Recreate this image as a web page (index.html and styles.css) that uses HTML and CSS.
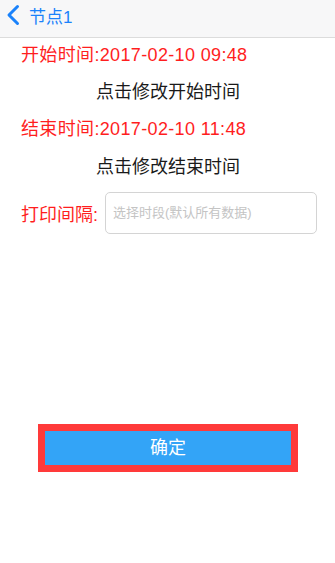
FILE: index.html
```html
<!DOCTYPE html>
<html lang="zh">
<head>
<meta charset="utf-8">
<link rel="stylesheet" href="styles.css">
</head>
<body>
<div class="nav">
  <svg class="chev" width="14" height="22" viewBox="0 0 14 22"><path d="M11.5 2.5 L3 11 L11.5 19.5" fill="none" stroke="#1a82fb" stroke-width="3" stroke-linecap="round" stroke-linejoin="round"/></svg>
  <span class="nav-title">节点1</span>
</div>
<div class="content">
  <div class="row red first">开始时间:2017-02-10 09:48</div>
  <div class="row action">点击修改开始时间</div>
  <div class="row red">结束时间:2017-02-10 11:48</div>
  <div class="row action">点击修改结束时间</div>
  <div class="print">
    <span class="label">打印间隔:</span>
    <div class="input">选择时段(默认所有数据)</div>
  </div>
  <div class="btn-wrap">
    <div class="btn">确定</div>
  </div>
</div>
</body>
</html>
```
FILE: styles.css
```css
html, body {
  margin: 0;
  padding: 0;
  background: #fff;
  width: 335px;
  height: 563px;
  overflow: hidden;
  font-family: "Liberation Sans", "Noto Sans CJK SC", sans-serif;
}
.nav {
  height: 37px;
  border-bottom: 1px solid #dcdcdc;
  background: #f7f7f8;
  display: flex;
  align-items: center;
  padding-left: 6px;
}
.chev {
  margin-top: -7px;
  display: block;
}
.nav-title {
  color: #1a82fb;
  font-size: 17px;
  margin-left: 9px;
  margin-top: -7px;
}
.content {
  padding-left: 21px;
}
.row {
  height: 37.5px;
  line-height: 37.5px;
  font-size: 18px;
  white-space: nowrap;
}
.row.first {
  height: 35.5px;
  line-height: 35.5px;
}
.red {
  color: #ff1e1e;
  letter-spacing: 0.35px;
}
.action {
  color: #1a1a1a;
  padding-left: 75px;
}
.print {
  margin-top: 6px;
  display: flex;
  align-items: center;
}
.label {
  color: #ff1e1e;
  font-size: 18px;
  width: 84px;
  white-space: nowrap;
}
.input {
  width: 212px;
  height: 42px;
  border: 1px solid #d4d4d4;
  border-radius: 5px;
  box-sizing: border-box;
  color: #c4c4c4;
  font-size: 13px;
  line-height: 40px;
  padding-left: 7px;
}
.btn-wrap {
  margin-top: 190px;
  margin-left: 17px;
  width: 260px;
  height: 48px;
  background: #ff3a3a;
  padding: 7px;
  box-sizing: border-box;
}
.btn {
  background: #33a4f7;
  height: 34px;
  line-height: 34px;
  color: #fff;
  text-align: center;
  font-size: 18px;
}
```
